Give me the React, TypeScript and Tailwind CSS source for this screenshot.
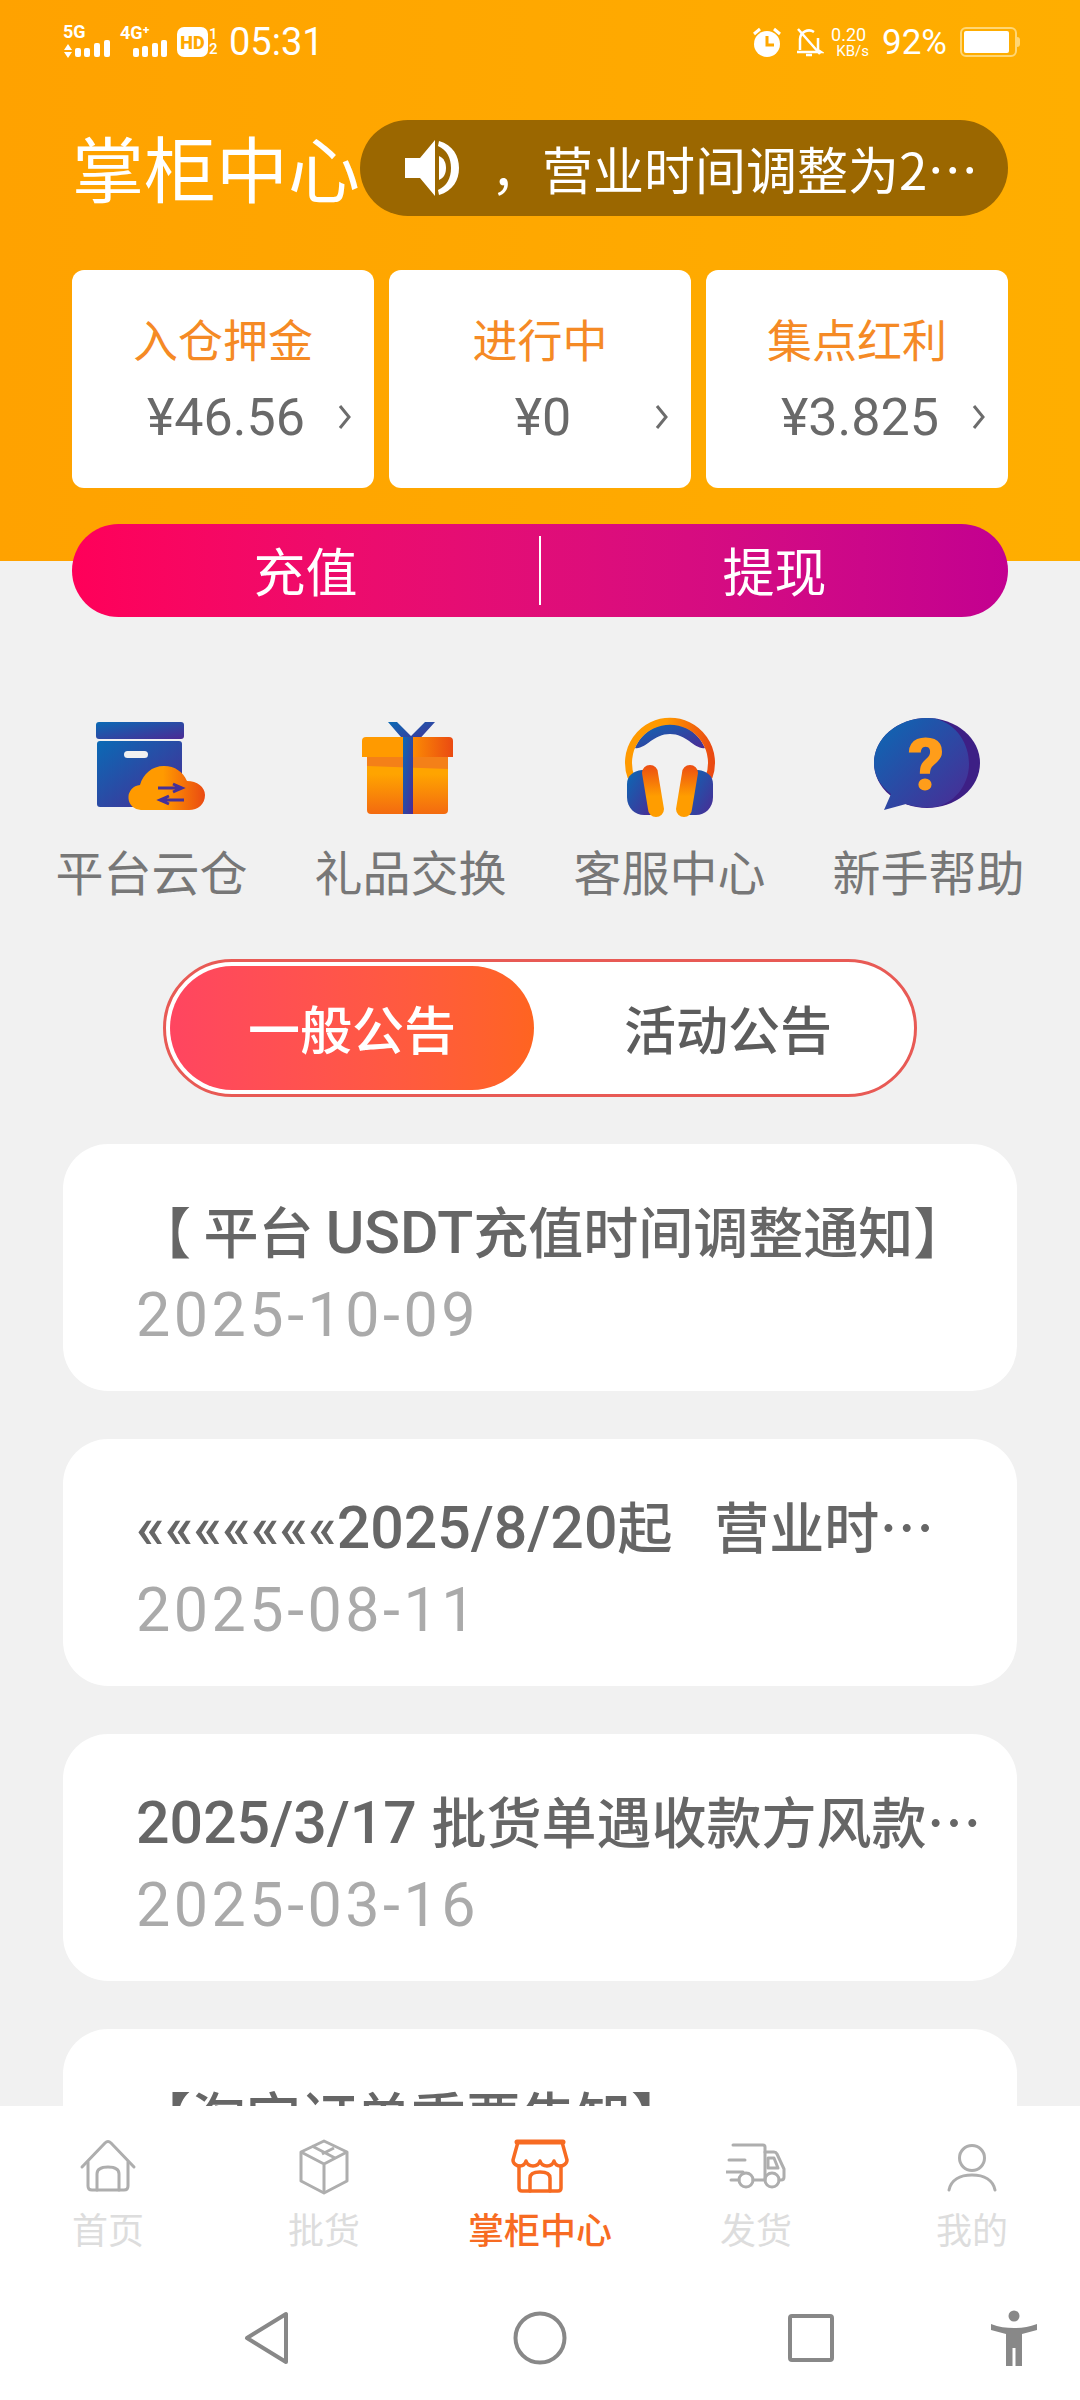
import type { ReactNode } from "react";

const cjk = "font-['Noto_Sans_CJK_SC',sans-serif]";

const stats = [
  { label: "入仓押金", value: "¥46.56" },
  { label: "进行中", value: "¥0" },
  { label: "集点红利", value: "¥3.825" },
];

// latin runs in the notice titles are a touch larger than the CJK ones
function L({ children }: { children: ReactNode }) {
  return <span className="text-[59px] font-['Roboto',sans-serif]">{children}</span>;
}

const notices = [
  { title: <>【 平台 <L>USDT</L>充值时间调整通知】</>, date: "2025-10-09" },
  { title: <><L>«««««««2025/8/20</L>起 <L>  </L>营业时…</>, date: "2025-08-11" },
  { title: <><L>2025/3/17 </L>批货单遇收款方风款…</>, date: "2025-03-16" },
  { title: <>【淘宝订单重要告知】</>, date: "2025-02-20" },
];

function Defs() {
  return (
    <defs>
      <linearGradient id="blue" x1="0" y1="0" x2="1" y2="1">
        <stop offset="0" stopColor="#0a6ab5" />
        <stop offset="1" stopColor="#4c2a94" />
      </linearGradient>
      <linearGradient id="orangeH" x1="0" y1="0" x2="1" y2="0">
        <stop offset="0.45" stopColor="#ff9a00" />
        <stop offset="1" stopColor="#ea4a12" />
      </linearGradient>
      <linearGradient id="orangeV" x1="0" y1="0" x2="0" y2="1">
        <stop offset="0.3" stopColor="#ffa400" />
        <stop offset="1" stopColor="#f36a10" />
      </linearGradient>
      <linearGradient id="padV" x1="0" y1="0" x2="0" y2="1">
        <stop offset="0" stopColor="#ec4d12" />
        <stop offset="0.6" stopColor="#ff9d00" />
      </linearGradient>
    </defs>
  );
}

function BoxIcon() {
  return (
    <svg width="120" height="100" viewBox="0 0 120 100">
      <Defs />
      <rect x="4" y="6" width="88" height="17" rx="3" fill="url(#blue)" />
      <rect x="5" y="25" width="85" height="66" rx="3" fill="url(#blue)" />
      <rect x="32" y="35" width="24" height="7" rx="3.5" fill="#f1f1f1" />
      <path d="M50 94a12.500 12.500 0 0 1-2-25c3-11 12-19 24-19 11 0 19 6 23 15 10 0 18 6 18 14 0 9-7 15-16 15z" fill="url(#orangeH)" />
      <path d="M66 72h22m-7-4 9 4-9 4M92 84H70m7-4-9 4 9 4" fill="none" stroke="#43309a" strokeWidth="3" />
    </svg>
  );
}

function GiftIcon() {
  return (
    <svg width="120" height="100" viewBox="0 0 120 100">
      <Defs />
      <path d="M37 6h9l14 14L74 6h10L64 28h-8z" fill="url(#blue)" />
      <path d="M16 41h81v53a4 4 0 0 1-4 4H20a4 4 0 0 1-4-4z" fill="url(#orangeV)" />
      <path d="M16 41h81v12l-81-3z" fill="#f48018" />
      <path d="M11 25a4 4 0 0 1 4-4h83a4 4 0 0 1 4 4v16H11z" fill="url(#orangeH)" />
      <rect x="52" y="21" width="10" height="77" fill="url(#blue)" />
    </svg>
  );
}

function HeadsetIcon() {
  return (
    <svg width="120" height="104" viewBox="0 0 120 104">
      <Defs />
      <path d="M25 32c10 2 18-14 35-14s25 16 35 14C89 18 76 8 60 8S31 18 25 32z" fill="url(#blue)" />
      <path d="M21 61A41.500 41.500 0 1 1 99 61" fill="none" stroke="url(#orangeH)" strokeWidth="7" />
      <path d="M32 54c-9 1-15 6-15 14v13c0 11 8 18 17 18h10l-5-45z" fill="url(#blue)" />
      <path d="M88 54c9 1 15 6 15 14v13c0 11-8 18-17 18H76l5-45z" fill="url(#blue)" />
      <path d="M32 57a8 8 0 0 1 16 0l6 36a8 8 0 0 1-16 0z" fill="url(#padV)" />
      <path d="M88 57a8 8 0 0 0-16 0l-6 36a8 8 0 0 0 16 0z" fill="url(#padV)" />
    </svg>
  );
}

function HelpIcon() {
  return (
    <svg width="120" height="100" viewBox="0 0 120 100">
      <Defs />
      <ellipse cx="58" cy="47" rx="53" ry="45" fill="#3d1f85" />
      <path d="M66 2.500C88 8 100 28 100 48c0 22-16 40-34 43-10 1-20 0-29-3L15 94l7-16C11 70 5 59 5 47 5 22 29 2 58 2z" fill="url(#blue)" />
      <text x="57" y="74" textAnchor="middle" fontSize="72" fontWeight="900" fill="#ff9d1a" className="font-['Roboto',sans-serif]">?</text>
    </svg>
  );
}

const shortcuts = [
  { label: "平台云仓", icon: <BoxIcon /> },
  { label: "礼品交换", icon: <GiftIcon /> },
  { label: "客服中心", icon: <HeadsetIcon /> },
  { label: "新手帮助", icon: <HelpIcon /> },
];

function HomeIcon() {
  return (
    <svg width="60" height="60" viewBox="0 0 60 60" fill="none" stroke="#aeaeae" strokeWidth="3" strokeLinejoin="round" strokeLinecap="round">
      <path d="M4 31 27 7q3-3 6 0l23 24" />
      <path d="M10 26v24q0 4 4 4h32q4 0 4-4V26" />
      <path d="M19 54V38q0-7 11-7t11 7v16" />
    </svg>
  );
}

function PackageIcon() {
  return (
    <svg width="60" height="60" viewBox="0 0 60 60" fill="none" stroke="#aeaeae" strokeWidth="3" strokeLinejoin="round">
      <path d="M30 5 53 16v29L30 57 7 45V16z" />
      <path d="M7 16l23 12 23-12M30 28v29" />
      <path d="M18 10l23 12M28 18l12-6" />
    </svg>
  );
}

function StoreIcon() {
  return (
    <svg width="60" height="60" viewBox="0 0 60 60" fill="none" stroke="#f76b22" strokeWidth="3.500" strokeLinejoin="round" strokeLinecap="round">
      <path d="M8 6h44l5 18c0 4-4 6-7 6-3 0-5-2-6-5-1 3-4 5-7 5s-6-2-7-5c-1 3-4 5-7 5s-6-2-7-5c-1 3-3 5-6 5-3 0-7-2-7-6z" />
      <path d="M7 6h46" strokeWidth="5" />
      <path d="M9 30v22q0 3 3 3h36q3 0 3-3V30" />
      <path d="M20 55V42q0-6 10-6t10 6v13" />
    </svg>
  );
}

function TruckIcon() {
  return (
    <svg width="60" height="60" viewBox="0 0 60 60" fill="none" stroke="#aeaeae" strokeWidth="3" strokeLinejoin="round" strokeLinecap="round">
      <path d="M7 9h30q2 0 2 2v33H27" />
      <path d="M39 16h9q2 0 3 2l7 15v8q0 3-3 3h-2" />
      <path d="M42 22h6l4 10H42z" />
      <path d="M3 24h16M0 36h17M5 44h8" />
      <circle cx="20" cy="44" r="7" />
      <circle cx="46" cy="44" r="7" />
    </svg>
  );
}

function UserIcon() {
  return (
    <svg width="60" height="60" viewBox="0 0 60 60" fill="none" stroke="#aeaeae" strokeWidth="3" strokeLinecap="round">
      <circle cx="30" cy="22" r="12.500" />
      <path d="M7 54c2-10 11-15 23-15s21 5 23 15" />
    </svg>
  );
}

const tabs = [
  { label: "首页", icon: <HomeIcon /> },
  { label: "批货", icon: <PackageIcon /> },
  { label: "掌柜中心", icon: <StoreIcon />, active: true },
  { label: "发货", icon: <TruckIcon /> },
  { label: "我的", icon: <UserIcon /> },
];

function StatusBar() {
  return (
    <div className="flex h-[84px] items-center justify-between pl-[62px] pr-[60px] text-white">
      <div className="flex items-center">
        <svg width="108" height="36" viewBox="0 0 108 36" fill="#fff">
          <text x="1" y="14" fontSize="18" fontWeight="700" className="font-['Roboto',sans-serif]">5G</text>
          <path d="M2 26l4-6 4 6zM2 28h8l-4 6z" />
          <rect x="13" y="24" width="6" height="9" rx="2" />
          <rect x="22" y="24" width="6" height="9" rx="2" />
          <rect x="32" y="19" width="6" height="14" rx="2" />
          <rect x="42" y="16" width="6" height="17" rx="2" />
          <text x="58" y="15" fontSize="18" fontWeight="700" className="font-['Roboto',sans-serif]">4G⁺</text>
          <rect x="71" y="24" width="6" height="9" rx="2" />
          <rect x="80" y="22" width="6" height="11" rx="2" />
          <rect x="90" y="19" width="6" height="14" rx="2" />
          <rect x="99" y="16" width="6" height="17" rx="2" />
        </svg>
        <div className="ml-[7px] flex h-[30px] w-[31px] items-center justify-center rounded-[7px] bg-white text-[18px] font-black text-[#ffa800] font-['Roboto',sans-serif]">
          HD
        </div>
        <div className="ml-[1px] flex w-[11px] flex-col text-[15px] leading-[15px] font-medium font-['Roboto',sans-serif]">
          <span>1</span>
          <span>2</span>
        </div>
        <span className="ml-[9px] text-[38px] leading-none font-['Roboto',sans-serif]">05:31</span>
      </div>
      <div className="flex items-center">
        <svg width="32" height="32" viewBox="0 0 32 32">
          <path d="M3 8l6-5M29 8l-6-5" stroke="#fff" strokeWidth="3" />
          <circle cx="16" cy="18" r="13" fill="#fff" />
          <path d="M16 10v9h7" fill="none" stroke="#ffa800" strokeWidth="3" />
        </svg>
        <svg className="ml-[11px]" width="30" height="32" viewBox="0 0 30 32" fill="none" stroke="#fff" strokeWidth="2.500">
          <path d="M6 24V13a9 9 0 0 1 14-7M24 12v12l3 2H3" />
          <path d="M4 3l22 25M12 29h6" />
        </svg>
        <div className="ml-[7px] flex w-[38px] flex-col items-end whitespace-nowrap font-['Roboto',sans-serif]">
          <span className="self-start text-[18px] leading-[18px]">0.20</span>
          <span className="text-[15px] leading-[14px]">KB/s</span>
        </div>
        <span className="ml-[13px] text-[35px] leading-none font-['Roboto',sans-serif]">92%</span>
        <div className="ml-[13px] h-[30px] w-[57px] rounded-[6px] border-[2px] border-[#ffd675] p-[2px]">
          <div className="h-full w-[45px] rounded-[2px] bg-white" />
        </div>
        <div className="h-[10px] w-[3px] rounded-r-sm bg-[#ffd675]" />
      </div>
    </div>
  );
}

export default function App() {
  return (
    <div className={`flex h-[2400px] w-[1080px] flex-col overflow-hidden bg-[#f1f1f1] ${cjk}`}>
      <div className="flex-1 overflow-hidden">
        {/* Header */}
        <div className="h-[561px] bg-gradient-to-r from-[#ffa200] to-[#ffae00]">
          <StatusBar />
          <div className="mt-[36px] flex h-[96px] items-center pl-[72px] pr-[72px]">
            <span className="mt-[-4px] w-[288px] text-[72px] leading-none whitespace-nowrap text-white">掌柜中心</span>
            <div className="flex h-full flex-1 items-center rounded-full bg-[#9b6700] pl-[43px] text-white">
              <svg width="60" height="62" viewBox="0 0 60 62" fill="#fff">
                <path d="M2 21h15L32 3v56L17 41H2z" />
                <path d="M36 4c14 4 20 15 20 27s-6 23-20 27l-1-5c9-4 13-12 13-22S44 13 35 9z" />
                <path d="M36 19c5 2 7 7 7 12s-2 10-7 12z" />
              </svg>
              <span className="ml-[28px] text-[51px] leading-none whitespace-nowrap">，营业时间调整为2…</span>
            </div>
          </div>
          <div className="mt-[54px] grid grid-cols-3 gap-[15px] px-[72px]">
            {stats.map((s) => (
              <div key={s.label} className="relative h-[218px] rounded-[12px] bg-white pt-[39px] text-center">
                <div className="text-[45px] leading-[60px] text-[#f58a25]">{s.label}</div>
                <div className="mt-[17px] pl-[6px] text-[52px] leading-[64px] text-[#696969] font-['Roboto',sans-serif]">
                  {s.value}
                </div>
                <svg className="absolute right-[21px] top-[134px]" width="16" height="26" viewBox="0 0 16 26" fill="none" stroke="#6c6c6c" strokeWidth="3">
                  <path d="M3 2l9 11-9 11" />
                </svg>
              </div>
            ))}
          </div>
        </div>

        {/* Recharge / withdraw */}
        <div className="mx-[72px] mt-[-37px] flex h-[93px] items-center rounded-full bg-gradient-to-r from-[#ff0059] to-[#c30090] text-[52px] leading-none text-white">
          <div className="mt-[-2px] flex-1 text-center">充值</div>
          <div className="h-[69px] w-[2px] bg-white" />
          <div className="mt-[-2px] flex-1 text-center">提现</div>
        </div>

        {/* Shortcuts */}
        <div className="mt-[99px] grid grid-cols-4 px-[22px]">
          {shortcuts.map((s) => (
            <div key={s.label} className="flex flex-col items-center">
              <div className="flex h-[100px] items-start">{s.icon}</div>
              <div className="mt-[26px] text-[48px] leading-[56px] text-[#777777]">{s.label}</div>
            </div>
          ))}
        </div>

        {/* Notice type switch */}
        <div className="mx-auto mt-[61px] flex h-[138px] w-[754px] items-center rounded-full border-[3px] border-[#e85a55] bg-white p-[4px]">
          <div className="flex h-[124px] w-[364px] items-center justify-center rounded-full bg-gradient-to-r from-[#ff4560] to-[#ff6420] text-[52px] font-medium text-white">
            一般公告
          </div>
          <div className="flex-1 pl-[12px] text-center text-[52px] font-medium text-[#5c5c5c]">活动公告</div>
        </div>

        {/* Notices */}
        <div className="mt-[47px] flex flex-col gap-[48px] px-[63px]">
          {notices.map((n) => (
            <div key={n.date} className="h-[247px] shrink-0 rounded-[45px] bg-white pl-[73px] pt-[52px]">
              <div className="h-[66px] text-[55px] leading-[66px] font-medium whitespace-pre text-[#666666]">{n.title}</div>
              <div className="mt-[22px] text-[61px] leading-[62px] tracking-[3.500px] text-[#aaaaaa] font-['Roboto',sans-serif]">
                {n.date}
              </div>
            </div>
          ))}
        </div>
      </div>

      {/* Bottom tabs */}
      <div className="relative h-[294px] shrink-0 bg-white">
        <div className="grid grid-cols-5 pt-[30px]">
          {tabs.map((t) => (
            <div key={t.label} className="flex flex-col items-center">
              {t.icon}
              <span className={`mt-[10px] text-[36px] leading-[44px] ${t.active ? "font-medium text-[#f76b22]" : "text-[#dddddd]"}`}>
                {t.label}
              </span>
            </div>
          ))}
        </div>
        {/* System navigation */}
        <div className="absolute inset-x-0 top-[204px] flex h-[56px] items-center">
          <svg className="ml-[244px]" width="46" height="54" viewBox="0 0 46 54" fill="none" stroke="#888888" strokeWidth="4" strokeLinejoin="round">
            <path d="M42 3v48L3 27z" />
          </svg>
          <svg className="ml-[223px]" width="54" height="54" viewBox="0 0 54 54" fill="none" stroke="#888888" strokeWidth="4">
            <circle cx="27" cy="27" r="24.500" />
          </svg>
          <svg className="ml-[221px]" width="46" height="48" viewBox="0 0 46 48" fill="none" stroke="#888888" strokeWidth="4" strokeLinejoin="round">
            <rect x="2" y="2" width="42" height="44" rx="2" />
          </svg>
          <svg className="ml-[156px]" width="48" height="56" viewBox="0 0 48 56" fill="#888888">
            <circle cx="24" cy="6" r="5.500" />
            <path d="M1 14c8 3 15 4 23 4s15-1 23-4v6l-15 4v32h-6.500V38h-3v18H16V24L1 20z" />
          </svg>
        </div>
      </div>
    </div>
  );
}
